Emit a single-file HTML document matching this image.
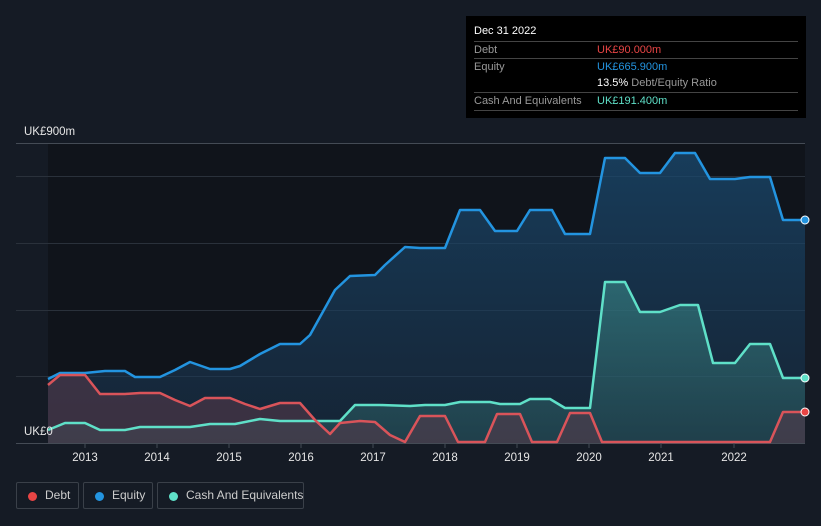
<!DOCTYPE html>
<html><head><meta charset="utf-8"><style>
html,body{margin:0;padding:0;background:#151b25;width:821px;height:526px;overflow:hidden;font-family:"Liberation Sans",sans-serif;}
.tt{position:absolute;left:466px;top:16px;width:340px;height:102px;background:#000;color:#fff;font-size:11px;}
.tt .r{position:absolute;left:8px;right:8px;border-top:1px solid #444;height:17px;line-height:17px;color:#999;white-space:nowrap;}
.tt .v{position:absolute;left:123px;}
.leg{position:absolute;top:482px;height:27px;border:1px solid #3a4049;border-radius:2px;color:#ccc;font-size:12px;line-height:25px;box-sizing:border-box;white-space:nowrap;}
.leg i{position:absolute;top:9px;left:11px;width:9px;height:9px;border-radius:50%;}
.leg span{position:absolute;left:28px;}
</style></head><body>
<svg width="821" height="526" style="position:absolute;left:0;top:0">
<defs>
<linearGradient id="ge" x1="0" y1="0" x2="0" y2="1"><stop offset="0" stop-color="#1a4a70" stop-opacity="0.75"/><stop offset="1" stop-color="#1a3550" stop-opacity="0.5"/></linearGradient>
<linearGradient id="gc" x1="0" y1="0" x2="0" y2="1"><stop offset="0" stop-color="#3a8a8a" stop-opacity="0.6"/><stop offset="1" stop-color="#2a5a60" stop-opacity="0.5"/></linearGradient>
</defs>
<rect x="48" y="143" width="757" height="300" fill="#10141b"/>
<g stroke="#2a313b" stroke-width="1">
<line x1="16" y1="143.5" x2="805" y2="143.5" stroke="#444b55"/>
<line x1="16" y1="176.5" x2="805" y2="176.5"/>
<line x1="16" y1="243.5" x2="805" y2="243.5"/>
<line x1="16" y1="310.5" x2="805" y2="310.5"/>
<line x1="16" y1="376.5" x2="805" y2="376.5"/>
<line x1="16" y1="443.5" x2="805" y2="443.5" stroke="#444b55"/>
</g>
<polygon fill="url(#ge)" points="48,443 48,379 60,373 85,373 105,371 125,371 135,377 160,377 175,370 190,362 210,369 230,369 240,366 260,354 280,344 300,344 310,335 335,290 350,276 375,275 385,265 405,247 420,248 445,248 460,210 480,210 495,231 517,231 530,210 552,210 565,234 590,234 605,158 625,158 640,173 660,173 675,153 695,153 710,179 735,179 750,177 770,177 783,220 805,220 805,443"/>
<polygon fill="url(#gc)" points="48,443 48,430 65,423 85,423 100,430 125,430 140,427 190,427 210,424 235,424 260,419 280,421 340,421 355,405 380,405 410,406 425,405 445,405 460,402 490,402 500,404 520,404 530,399 550,399 565,408 590,408 605,282 625,282 640,312 660,312 680,305 698,305 713,363 735,363 750,344 770,344 783,378 805,378 805,443"/>
<polygon fill="#5a3a4a" fill-opacity="0.55" points="48,443 48,385 60,375 85,375 100,394 125,394 140,393 160,393 175,400 190,406 205,398 230,398 245,404 260,409 280,403 300,403 315,420 330,434 340,423 360,421 375,422 390,435 405,442 420,416 445,416 458,442 485,442 497,414 520,414 532,442 557,442 570,413 590,413 602,442 770,442 783,412 805,412 805,443"/>
<g fill="none" stroke-width="2.5" stroke-linejoin="round">
<polyline stroke="#2394e0" points="48,379 60,373 85,373 105,371 125,371 135,377 160,377 175,370 190,362 210,369 230,369 240,366 260,354 280,344 300,344 310,335 335,290 350,276 375,275 385,265 405,247 420,248 445,248 460,210 480,210 495,231 517,231 530,210 552,210 565,234 590,234 605,158 625,158 640,173 660,173 675,153 695,153 710,179 735,179 750,177 770,177 783,220 805,220"/>
<polyline stroke="#5fe0c8" points="48,430 65,423 85,423 100,430 125,430 140,427 190,427 210,424 235,424 260,419 280,421 340,421 355,405 380,405 410,406 425,405 445,405 460,402 490,402 500,404 520,404 530,399 550,399 565,408 590,408 605,282 625,282 640,312 660,312 680,305 698,305 713,363 735,363 750,344 770,344 783,378 805,378"/>
<polyline stroke="#d9545a" points="48,385 60,375 85,375 100,394 125,394 140,393 160,393 175,400 190,406 205,398 230,398 245,404 260,409 280,403 300,403 315,420 330,434 340,423 360,421 375,422 390,435 405,442 420,416 445,416 458,442 485,442 497,414 520,414 532,442 557,442 570,413 590,413 602,442 770,442 783,412 805,412"/>
</g>
<circle cx="805" cy="220" r="4" fill="#2394e0" stroke="#fff" stroke-width="1"/>
<circle cx="805" cy="378" r="4" fill="#5fe0c8" stroke="#fff" stroke-width="1"/>
<circle cx="805" cy="412" r="4" fill="#e84545" stroke="#fff" stroke-width="1"/>
<g stroke="#444b55"><line x1="85" y1="443" x2="85" y2="448"/><line x1="157" y1="443" x2="157" y2="448"/><line x1="229" y1="443" x2="229" y2="448"/><line x1="301" y1="443" x2="301" y2="448"/><line x1="373" y1="443" x2="373" y2="448"/><line x1="445" y1="443" x2="445" y2="448"/><line x1="517" y1="443" x2="517" y2="448"/><line x1="589" y1="443" x2="589" y2="448"/><line x1="661" y1="443" x2="661" y2="448"/><line x1="734" y1="443" x2="734" y2="448"/></g>
<g fill="#e6e6e6" font-family="Liberation Sans, sans-serif" font-size="11.5" text-anchor="middle">
<text x="85" y="461">2013</text><text x="157" y="461">2014</text><text x="229" y="461">2015</text><text x="301" y="461">2016</text><text x="373" y="461">2017</text><text x="445" y="461">2018</text><text x="517" y="461">2019</text><text x="589" y="461">2020</text><text x="661" y="461">2021</text><text x="734" y="461">2022</text>
<text x="24" y="135" text-anchor="start">UK£900m</text>
<text x="24" y="435" text-anchor="start">UK£0</text>
</g>
</svg>
<div class="tt">
<div style="position:absolute;left:8px;top:9px;color:#fff;font-size:11px">Dec 31 2022</div>
<div class="r" style="top:25px">Debt<span class="v" style="color:#e84545">UK£90.000m</span></div>
<div class="r" style="top:42px">Equity<span class="v" style="color:#2394e0">UK£665.900m</span></div>
<div class="r" style="top:59px;border-top:none"><span class="v"><b style="color:#fff;font-weight:normal">13.5%</b> Debt/Equity Ratio</span></div>
<div class="r" style="top:76px;border-bottom:1px solid #444">Cash And Equivalents<span class="v" style="color:#5fe0c8">UK£191.400m</span></div>
</div>
<div class="leg" style="left:16px;width:63px"><i style="background:#e84545"></i><span>Debt</span></div>
<div class="leg" style="left:83px;width:70px"><i style="background:#2394e0"></i><span>Equity</span></div>
<div class="leg" style="left:157px;width:147px"><i style="background:#5fe0c8"></i><span>Cash And Equivalents</span></div>
</body></html>
